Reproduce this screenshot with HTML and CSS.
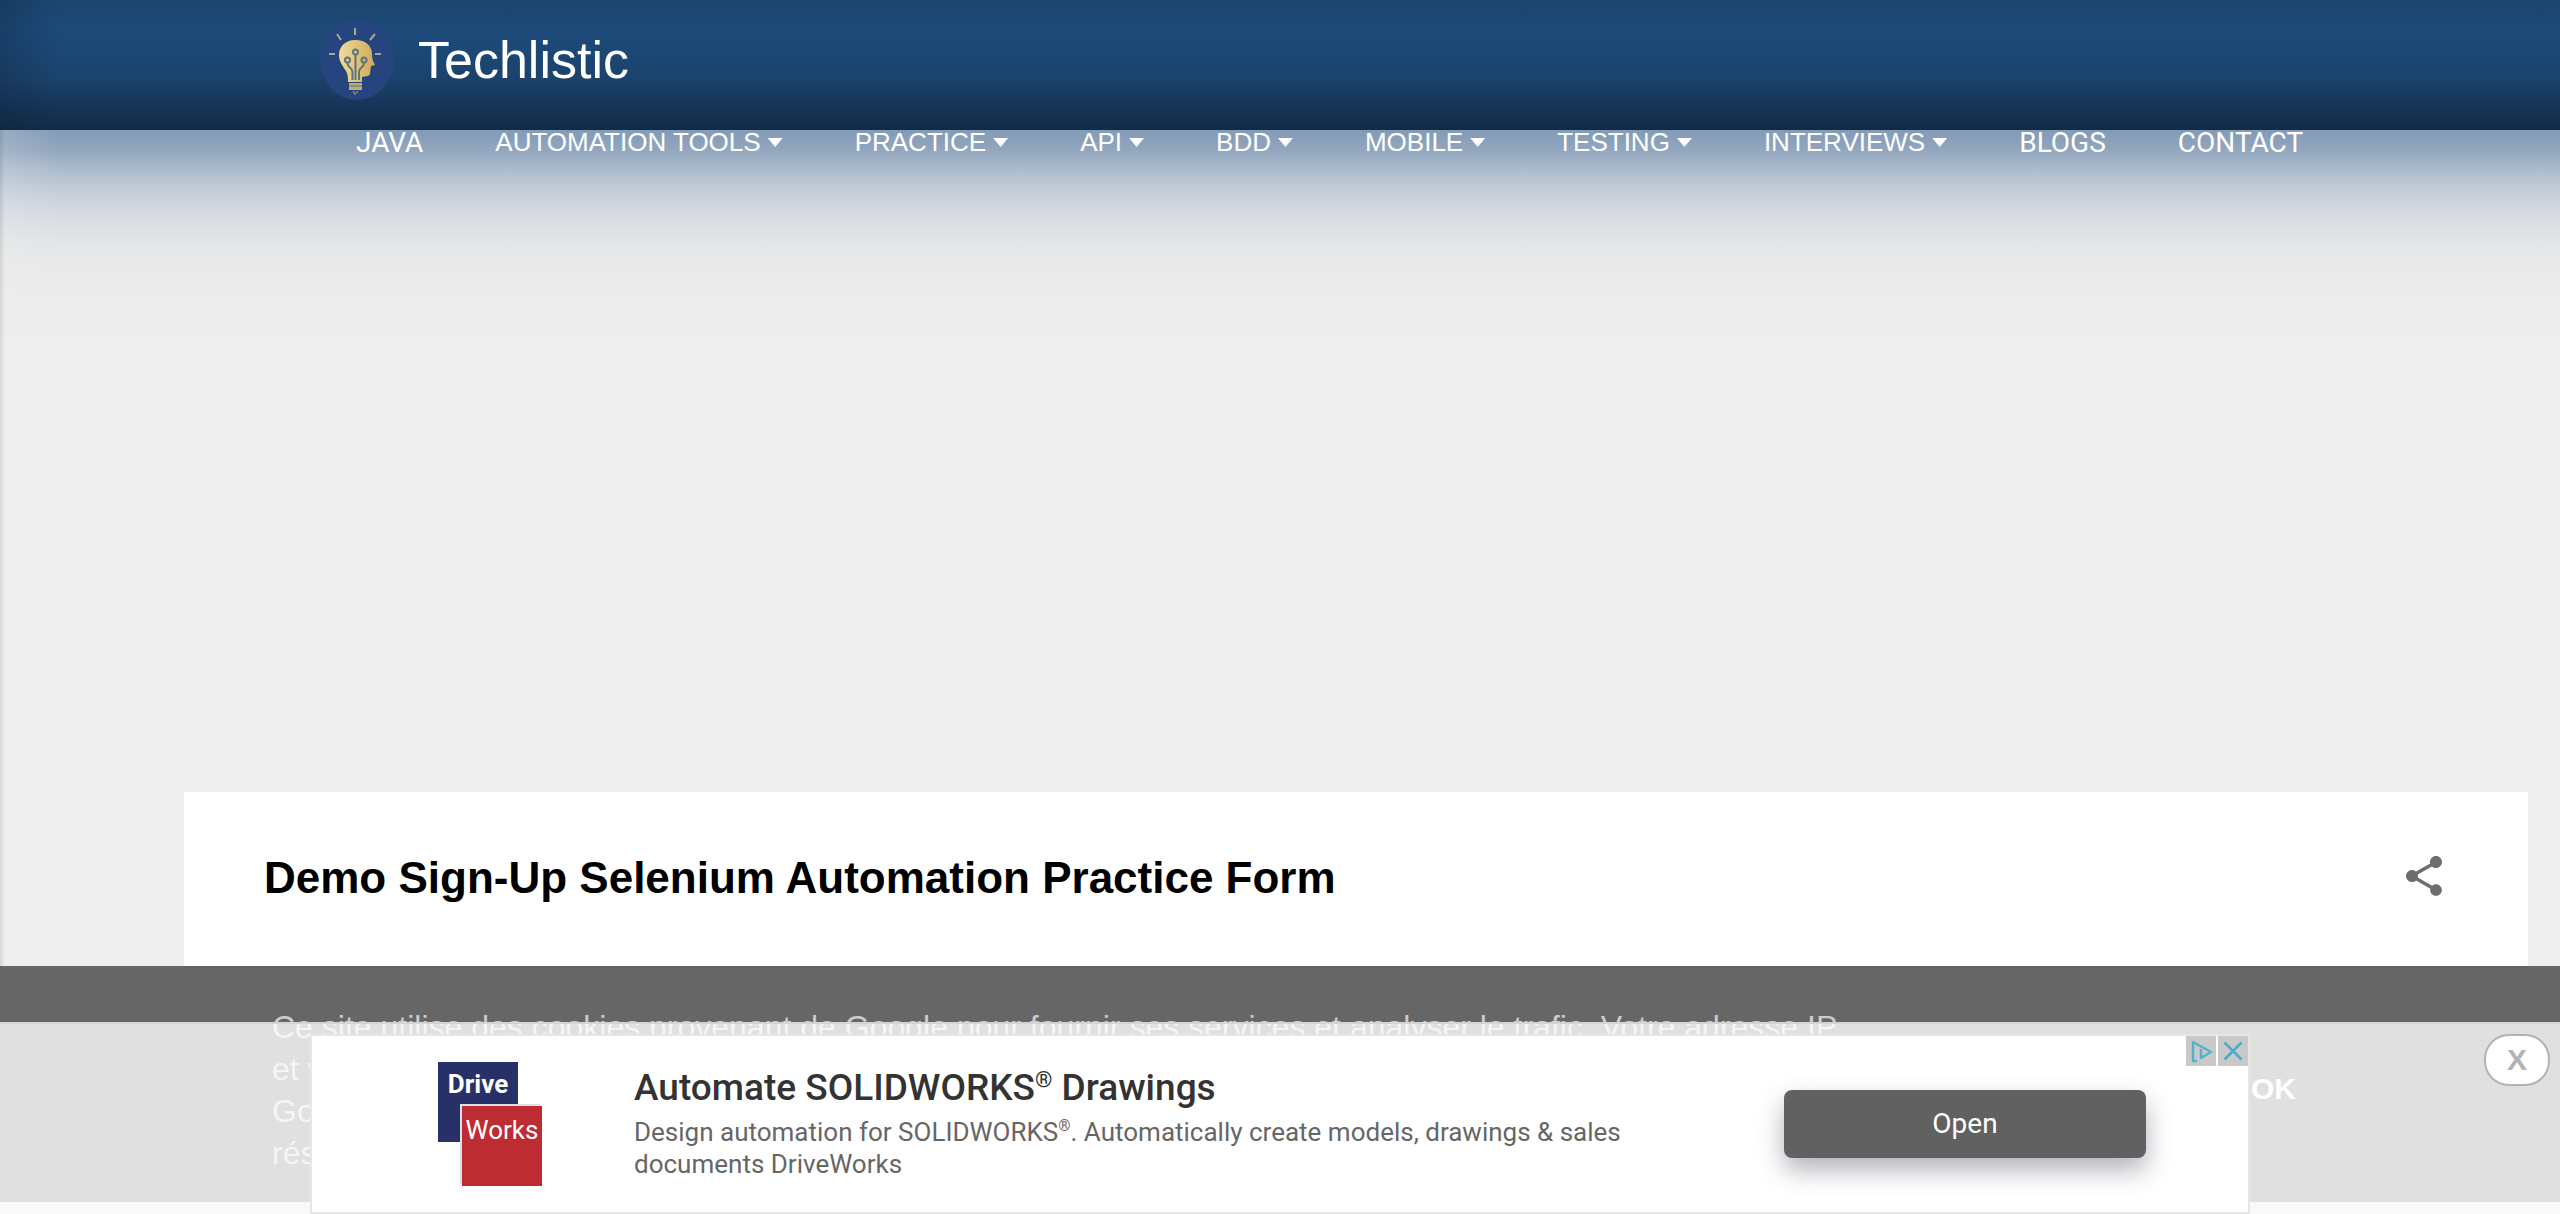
FILE: index.html
```html
<!DOCTYPE html>
<html lang="fr">
<head>
<meta charset="utf-8">
<title>Techlistic</title>
<link rel="stylesheet" href="styles.css">
</head>
<body>
<header class="site-header">
  <svg class="logo" viewBox="0 0 74 80" aria-hidden="true">
    <defs>
      <linearGradient id="gold" x1="0" y1="0" x2="1" y2="0">
        <stop offset="0" stop-color="#f0dc98"/><stop offset="1" stop-color="#d0a858"/>
      </linearGradient>
    </defs>
    <ellipse cx="37" cy="40" rx="37" ry="40" fill="#26457f"/>
    <path d="M35 20C25 20 19 27 19 35c0 7 4 11 7 16 2 4 2 7 2 11h14v-5c3-1 7 0 8-3l1-8 4-1c-2-4-3-6-3-11 0-8-6-14-17-14z" fill="url(#gold)"/>
    <path d="M29 63h13v7H29z" fill="#b9ae7d"/>
    <path d="M29 66h13M33 71l2 3 3-3" stroke="#7d8577" stroke-width="1.5" fill="none"/>
    <g fill="none" stroke="#5d7480" stroke-width="2">
      <circle cx="35.5" cy="32" r="2.5"/><circle cx="27.5" cy="40" r="2.500"/><circle cx="44" cy="40" r="2.500"/>
      <path d="M35.500 35v25M27.500 43c0 5 5 4 5 9v8M44 43c0 5-5 4-5 9v8"/>
    </g>
    <path d="M35 8v7M17 14l4 6M55 14l-5 6M9 34h6M55 34h6" stroke="#a9aa8c" stroke-width="2" fill="none"/>
  </svg>
  <a class="brand" href="#">Techlistic</a>
</header>

<nav class="nav">
  <a class="plain" href="#">JAVA</a>
  <a class="drop" href="#">AUTOMATION TOOLS</a>
  <a class="drop" href="#">PRACTICE</a>
  <a class="drop" href="#">API</a>
  <a class="drop" href="#">BDD</a>
  <a class="drop" href="#">MOBILE</a>
  <a class="drop" href="#">TESTING</a>
  <a class="drop" href="#">INTERVIEWS</a>
  <a class="plain" href="#">BLOGS</a>
  <a class="plain" href="#">CONTACT</a>
</nav>

<main class="post">
  <h1>Demo Sign-Up Selenium Automation Practice Form</h1>
  <button class="share" type="button" aria-label="Share">
    <svg viewBox="0 0 24 24"><path d="M18 16.080c-.76 0-1.440.300-1.960.770L8.910 12.700c.050-.230.090-.460.090-.700s-.040-.470-.090-.700l7.050-4.110c.540.500 1.250.810 2.040.810 1.660 0 3-1.340 3-3s-1.340-3-3-3-3 1.340-3 3c0 .240.040.470.090.700L8.040 9.810C7.500 9.310 6.790 9 6 9c-1.660 0-3 1.340-3 3s1.340 3 3 3c.790 0 1.500-.310 2.040-.810l7.120 4.160c-.050.210-.080.430-.080.650 0 1.610 1.310 2.920 2.920 2.920s2.920-1.310 2.920-2.920-1.310-2.920-2.920-2.920z" fill="#6e6e6e"/></svg>
  </button>
</main>

<section class="cookies">
  <p>Ce site utilise des cookies provenant de Google pour fournir ses services et analyser le trafic. Votre adresse IP<br>et v<br>Go<br>rés</p>
  <button class="ok" type="button">OK</button>
</section>

<aside class="anchor">
  <div class="ad">
    <div class="ad-logo"><span class="drive">Drive</span><span class="works">Works</span></div>
    <div class="ad-text">
      <h2>Automate SOLIDWORKS<sup>®</sup> Drawings</h2>
      <p>Design automation for SOLIDWORKS<sup>®</sup>. Automatically create models, drawings &amp; sales<br>documents DriveWorks</p>
    </div>
    <button class="open" type="button">Open</button>
    <div class="ad-choices">
      <button type="button" aria-label="AdChoices"><svg viewBox="0 0 30 30"><path d="M11 25H7V6l18 10-10 6v-9M15 10v1" fill="none" stroke="#55b2cc" stroke-width="2.500" stroke-linejoin="round"/></svg></button>
      <button type="button" aria-label="Close ad"><svg viewBox="0 0 30 30"><path d="M6.500 6.500l17 17M23.500 6.500l-17 17" stroke="#4bacca" stroke-width="2.500"/></svg></button>
    </div>
  </div>
  <button class="dismiss" type="button">X</button>
</aside>
</body>
</html>
```
FILE: styles.css
```css
* { box-sizing: border-box; }

body {
  margin: 0;
  min-height: 100vh;
  font-family: "Liberation Sans", Arial, sans-serif;
  background:
    linear-gradient(to right, rgba(0, 0, 0, .1), transparent 5px),
    linear-gradient(#eee, #eee);
}

button { padding: 0; border: 0; background: none; font: inherit; cursor: pointer; }
a { color: #fff; text-decoration: none; }
sup { font-size: 60%; line-height: 0; }

.site-header {
  display: flex;
  align-items: flex-start;
  gap: 24px;
  height: 130px;
  padding: 20px 320px;
  background:
    linear-gradient(to right, rgba(15, 35, 60, .3), transparent 60px),
    linear-gradient(#1c456f, #1d4a7a 28px, #1c4876 50px, #1b426a 80px, #163558 105px, #112b45 130px);
}
.logo { width: 74px; height: 80px; }
.brand { font-size: 52px; line-height: 80px; }

.nav {
  display: flex;
  gap: 72px;
  height: 230px;
  padding: 0 0 0 356px;
  background:
    linear-gradient(to right, rgba(0, 0, 0, .1), transparent 5px),
    linear-gradient(to right, rgba(238, 238, 238, .2), transparent 60px),
    linear-gradient(#829bb7, #92a6be 20px, #adbccd 40px, #cdd3dd 70px, #dadde2 90px, #e2e5e7 110px, #e8e9ea 130px, #ececec 170px, #eee 210px);
}
.nav a { font-size: 26px; line-height: 24px; white-space: nowrap; }
.nav .plain { font-family: Roboto, sans-serif; font-size: 28px; line-height: 26px; }
.drop::after {
  content: "";
  display: inline-block;
  width: 15px;
  height: 9px;
  margin-left: 7px;
  vertical-align: 4px;
  background: #fff;
  clip-path: polygon(0 0, 100% 0, 50% 100%);
}

.post {
  display: flex;
  justify-content: space-between;
  align-items: flex-start;
  margin: 432px 32px 0 184px;
  padding: 60px 80px 300px;
  background: #fff;
}
.post h1 { margin: 0; font-size: 44px; line-height: 52px; color: #000; }
.share svg { display: block; width: 48px; height: 48px; }

.cookies {
  position: fixed;
  left: 0;
  right: 0;
  bottom: 0;
  height: 248px;
  display: flex;
  justify-content: space-between;
  padding: 40px 264px 0 272px;
  background: #666;
  border-bottom: 12px solid #e1e1e1;
  color: #ccc;
}
.cookies p { margin: 0; font-size: 32px; line-height: 42px; }
.cookies .ok { align-self: flex-start; margin-top: 62px; font-size: 30px; line-height: 42px; font-weight: 700; color: #fff; }

.anchor {
  position: fixed;
  left: 0;
  right: 0;
  bottom: 0;
  height: 192px;
  padding-top: 10px;
  border-top: 2px solid #d4d4d4;
  background: rgba(255, 255, 255, .8);
}
.ad {
  position: relative;
  display: flex;
  align-items: flex-start;
  width: 1940px;
  max-width: 80%;
  height: 180px;
  margin: 0 auto;
  padding: 26px 102px 0 126px;
  border: 2px solid #e6e6e6;
  background: #fff;
}
.ad-logo {
  position: relative;
  width: 104px;
  height: 124px;
  font: 26px/36px Roboto, sans-serif;
  color: #fff;
}
.ad-logo span { position: absolute; width: 80px; height: 80px; text-align: center; }
.drive { left: 0; top: 0; padding-top: 4px; background: #273168; font-weight: 700; }
.works { right: 0; bottom: 0; padding-top: 6px; background: #bd2b33; box-shadow: -2px -2px 0 #dfe0ea; }
.ad-text { flex: 1; margin-left: 92px; padding-right: 140px; font-family: Roboto, sans-serif; }
.ad-text h2 { margin: 4px 0 6px; font-size: 37px; line-height: 44px; font-weight: 500; color: #333; }
.ad-text p { margin: 0; font-size: 26px; line-height: 32px; color: #666; }
.open {
  width: 362px;
  height: 68px;
  margin-top: 28px;
  border-radius: 8px;
  background: #616161;
  box-shadow: 0 12px 26px rgba(60, 64, 80, .4);
  font: 28px/68px Roboto, sans-serif;
  color: #fff;
}
.ad-choices { position: absolute; top: 0; right: 0; display: flex; gap: 2px; }
.ad-choices button { width: 30px; height: 30px; background: #c9c9c9; }
.ad-choices svg { display: block; }
.dismiss {
  position: absolute;
  top: 10px;
  right: 10px;
  width: 66px;
  height: 52px;
  border: 2px solid #b3b3b3;
  border-radius: 25px;
  background: #fff;
  font-size: 30px;
  font-weight: 700;
  color: #b3b3b3;
}
```
